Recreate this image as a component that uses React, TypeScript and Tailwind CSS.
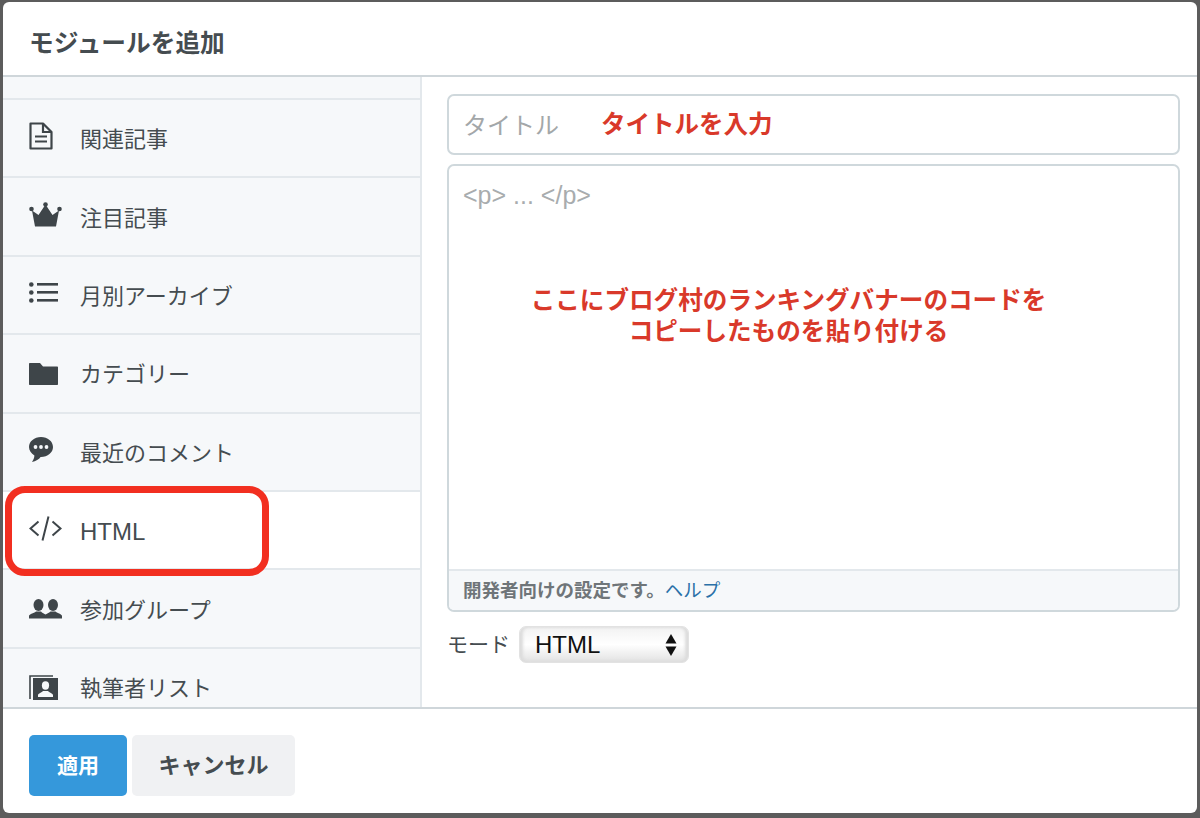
const jp = `font-['Liberation_Sans','Noto_Sans_CJK_JP',sans-serif]`;

const icons: Record<string, React.ReactNode> = {
  file: (
    <svg width="24" height="28" viewBox="0 0 24 28" fill="none" stroke="#3e4549" strokeWidth="2.2">
      <path d="M1.5 1.5H14L22.5 10V26.5H1.5Z" strokeLinejoin="round" />
      <path d="M14 1.5V10H22.5M6 14.5H18M6 19.5H18" />
    </svg>
  ),
  crown: (
    <svg width="33" height="25" viewBox="0 0 33 25" fill="#3e4549">
      <circle cx="2.5" cy="7" r="2.3" />
      <circle cx="16.5" cy="2.5" r="2.3" />
      <circle cx="30.5" cy="7" r="2.3" />
      <path d="M3 8.5L9.5 13L15.5 4H17.5L23.5 13L30 8.5L27 24.5H6Z" />
    </svg>
  ),
  list: (
    <svg width="29" height="21" viewBox="0 0 29 21" fill="#3e4549">
      <circle cx="2.3" cy="2.5" r="2.3" />
      <circle cx="2.3" cy="10.5" r="2.3" />
      <circle cx="2.3" cy="18.5" r="2.3" />
      <rect x="8" y="1" width="21" height="2.6" />
      <rect x="8" y="9" width="21" height="2.6" />
      <rect x="8" y="17" width="21" height="2.6" />
    </svg>
  ),
  folder: (
    <svg width="29" height="22" viewBox="0 0 29 22" fill="#3e4549">
      <path d="M1 0H11L14 3.5H28C28.6 3.5 29 3.9 29 4.5V21C29 21.6 28.6 22 28 22H1C.4 22 0 21.6 0 21V1C0 .4.4 0 1 0Z" />
    </svg>
  ),
  comment: (
    <svg width="24" height="26" viewBox="0 0 24 26">
      <path fill="#3e4549" d="M12 0C5.4 0 0 4.4 0 10C0 13.6 2.2 16.6 5.4 18.4C5.4 20.6 4.2 23 3 25C6.8 24.2 10 22.4 11.6 20C11.8 20 11.8 20 12 20C18.6 20 24 15.6 24 10C24 4.4 18.6 0 12 0Z" />
      <circle cx="6.5" cy="10" r="1.9" fill="#f6f8fa" />
      <circle cx="12" cy="10" r="1.9" fill="#f6f8fa" />
      <circle cx="17.5" cy="10" r="1.9" fill="#f6f8fa" />
    </svg>
  ),
  code: (
    <svg width="33" height="25" viewBox="0 0 33 25" fill="none" stroke="#3e4549" strokeWidth="2">
      <path d="M9.5 5.5L1.5 12.5L9.5 19.5M23.5 5.5L31.5 12.5L23.5 19.5M19.5 .5L13.5 24.5" />
    </svg>
  ),
  group: (
    <svg width="33" height="20" viewBox="0 0 33 20" fill="#3e4549">
      <ellipse cx="9.5" cy="6" rx="5" ry="6" />
      <ellipse cx="24" cy="6" rx="5" ry="6" />
      <path d="M0 19.5V17C0 15 6 14 7 12.5H12C13 14 15.5 14.6 16.5 15.6C17.6 14.6 20 14 21.5 12.5H26.5C27.5 14 33 15 33 17V19.5Z" />
    </svg>
  ),
  author: (
    <svg width="29" height="25" viewBox="0 0 29 25">
      <path fill="none" stroke="#3e4549" strokeWidth="1.6" d="M1 24V1H24" />
      <rect x="4" y="3" width="25" height="22" fill="#3e4549" />
      <ellipse cx="16.5" cy="10.5" rx="3.6" ry="4.2" fill="#f6f8fa" />
      <path d="M9 22V20C9 18.4 13 17.6 14 16H19C20 17.6 24 18.4 24 20V22Z" fill="#f6f8fa" />
    </svg>
  ),
};

const items = [
  { icon: "file", label: "関連記事", shift: "-mt-[4px]" },
  { icon: "crown", label: "注目記事", shift: "-mt-[4px]" },
  { icon: "list", label: "月別アーカイブ", shift: "-mt-[4px]" },
  { icon: "folder", label: "カテゴリー", shift: "mt-[1px]" },
  { icon: "comment", label: "最近のコメント", shift: "-mt-[4px]" },
  { icon: "code", label: "HTML", active: true, shift: "-mt-[3px]" },
  { icon: "group", label: "参加グループ", shift: "mt-[1px]" },
  { icon: "author", label: "執筆者リスト", shift: "mt-[1px]" },
];

function Row({ icon, label, active, shift }: { icon: string; label: string; active?: boolean; shift: string }) {
  return (
    <div className={`relative flex h-[78.4px] shrink-0 items-center border-b-2 border-[#e3e8ec] pl-[26px] ${active ? "bg-white" : ""}`}>
      <div className={`flex w-[51px] shrink-0 ${shift}`}>{icons[icon]}</div>
      <span className={`pt-[4px] leading-none text-[#454c50] ${active ? "text-[24px]" : "text-[22px]"}`}>{label}</span>
      {active && (
        <div className="absolute left-[2px] top-[-6px] h-[90px] w-[264px] rounded-[20px] border-[7px] border-[#f22f20]" />
      )}
    </div>
  );
}

export default function App() {
  return (
    <div className={`h-[818px] w-[1200px] overflow-hidden bg-[#5c5c5c] pl-[3px] pr-[3px] pt-[2px] ${jp}`}>
      <div className="flex h-[811px] flex-col overflow-hidden rounded-[6px] bg-white">
        <div className="flex h-[75px] shrink-0 items-center border-b-2 border-[#cfd6da] pl-[26px] pt-[12px]">
          <h1 className="text-[24.7px] font-bold leading-none text-[#454c50]">モジュールを追加</h1>
        </div>

        <div className="flex min-h-0 flex-1">
          <div className="flex w-[419px] shrink-0 flex-col overflow-hidden border-r-2 border-[#e3e8ec] bg-[#f6f8fa]">
            <div className="h-[23px] shrink-0 border-b-2 border-[#e3e8ec]" />
            {items.map((item) => (
              <Row key={item.label} {...item} />
            ))}
          </div>

          <div className="flex min-w-0 flex-1 flex-col pl-[25px] pr-[17px] pt-[17px]">
            <div className="flex h-[61px] shrink-0 items-center rounded-[7px] border-2 border-[#cfd8dc] pl-[14px] pt-[2px]">
              <span className="w-[138px] text-[24px] leading-none text-[#a3a7a9]">タイトル</span>
              <span className="text-[24.5px] font-bold leading-none text-[#d9392a]">タイトルを入力</span>
            </div>

            <div className="mt-[9px] flex h-[448px] shrink-0 flex-col overflow-hidden rounded-[7px] border-2 border-[#cfd8dc]">
              <div className="flex min-h-0 flex-1 flex-col px-[14px] pt-[17px]">
                <div className="text-[25px] leading-none text-[#a8acae]">{"<p> ... </p>"}</div>
                <div className="mt-[77px] flex flex-col items-center pr-[50px] text-[24.6px] font-bold leading-[31px] text-[#d9392a]">
                  <span>ここにブログ村のランキングバナーのコードを</span>
                  <span>コピーしたものを貼り付ける</span>
                </div>
              </div>
              <div className="flex h-[41px] shrink-0 items-center border-t-2 border-[#e3e8ec] bg-[#f6f8fa] pl-[14px] pt-[2px] text-[18.5px] leading-none">
                <span className="font-bold text-[#6f7579]">開発者向けの設定です。</span>
                <span className="text-[#2a70a8]">ヘルプ</span>
              </div>
            </div>

            <div className="mt-[14px] flex items-center">
              <span className="w-[72px] text-[21px] leading-none text-[#454c50]">モード</span>
              <div className="flex h-[37px] w-[170px] items-center justify-between rounded-[7px] border border-[#e2e2e2] bg-gradient-to-b from-[#f2f2f2] via-[#ffffff] to-[#e2e2e2] pl-[15px] pr-[11px] shadow-[inset_3px_0_3px_#dcdcdc,inset_-3px_0_3px_#dcdcdc]">
                <span className="text-[24px] leading-none text-[#111111]">HTML</span>
                <svg width="12" height="22" viewBox="0 0 12 22" fill="#111111">
                  <path d="M6 0L11.5 9.5H.5Z" />
                  <path d="M6 22L.5 12.5H11.5Z" />
                </svg>
              </div>
            </div>
          </div>
        </div>

        <div className="flex h-[106px] shrink-0 items-start gap-[5px] border-t-2 border-[#cfd6da] pl-[26px] pt-[26px]">
          <button className="flex h-[61px] w-[98px] items-center justify-center rounded-[5px] bg-[#3598db] text-[21px] font-bold text-white">適用</button>
          <button className="flex h-[61px] w-[163px] items-center justify-center rounded-[5px] bg-[#f0f1f3] text-[22px] font-bold text-[#454c50]">キャンセル</button>
        </div>
      </div>
    </div>
  );
}
